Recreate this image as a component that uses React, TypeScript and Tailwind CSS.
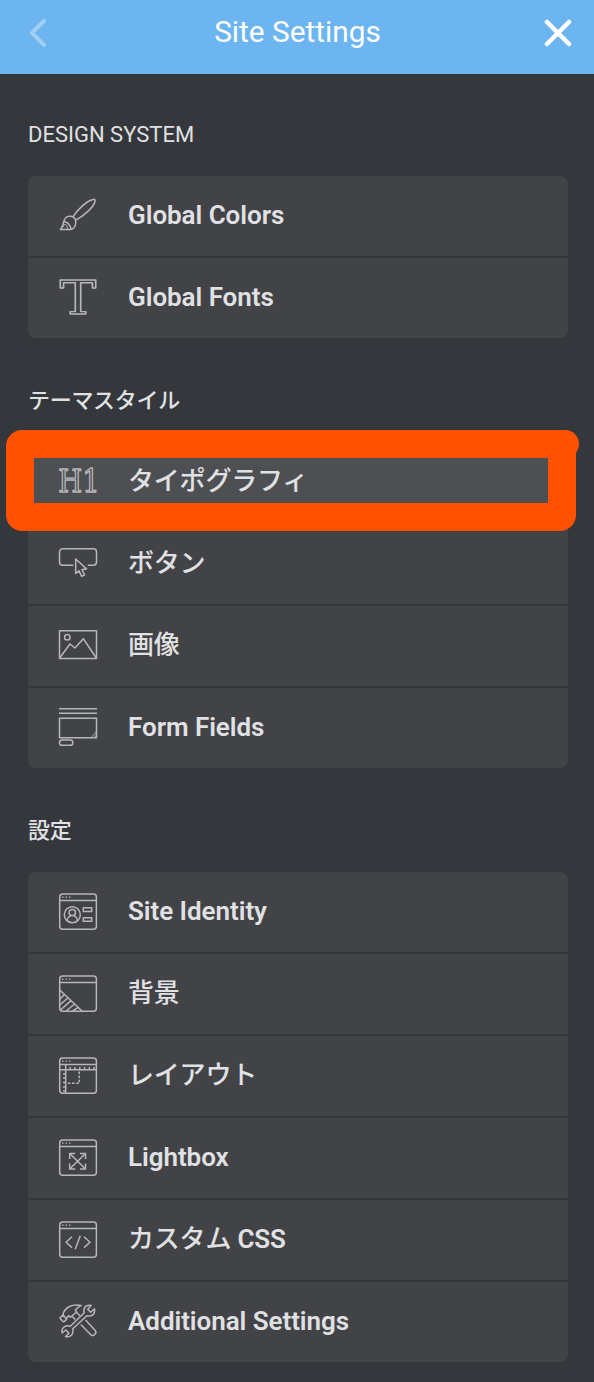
import type {ReactNode} from "react";

type Item = {
    label: ReactNode;
    icon: ReactNode;
    active?: boolean;
}

type SectionProps = {
    title: string;
    titleClass: string;
    items: Item[];
}

const Icon = ({children}: {children: ReactNode}) => (
    <svg viewBox="0 0 40 40" width={40} height={40} fill="none" stroke="currentColor"
         strokeWidth={1.5} strokeLinejoin="round" className="shrink-0 overflow-visible text-[#b6b7b9]">
        {children}
    </svg>
);

//browser window frame shared by the settings icons
const WindowIcon = ({children}: {children: ReactNode}) => (
    <Icon>
        <rect x="1.7" y="1.9" width="36.7" height="35.3" rx="3"/>
        <path d="M1.5 8.4H38.5"/>
        <path d="M4 5.2h1.5M7.5 5.2h1.5M11 5.2h1.5" strokeWidth="1.2"/>
        {children}
    </Icon>
);

const BrushIcon = () => (
    <Icon>
        <path d="M15.3 20.3C19 14.5 28.5 4.5 35.3 3.4C36.8 3.2 37.4 4 37 5.5C35.5 11.5 25 20.5 18.2 23.8"/>
        <path d="M2.5 33.4C4.8 31.2 5.2 28.6 5.8 25.5C6.5 21.8 9.5 20 12.6 20.3C15.8 20.6 17.8 23 17.8 26C17.8 30.3 15.5 33.5 12.5 33.5Z"/>
        <path d="M5.8 25.5C9.3 26 12 28.6 13.2 33.4"/>
        <path d="M4.8 31.5C5.5 29.5 6.3 28.2 7.2 28.3C8.4 28.6 9.3 30.5 9.6 33.2" strokeWidth="1"/>
    </Icon>
);

const LetterIcon = () => (
    <Icon>
        <text x="20" y="35.9" fontSize="47" textAnchor="middle" fontFamily="DejaVu Serif, serif"
              textLength="36.5" lengthAdjust="spacingAndGlyphs" strokeWidth="1.4">T</text>
    </Icon>
);

const HeadingIcon = () => (
    <Icon>
        <text x="0.2" y="30.3" fontSize="31.5" fontFamily="DejaVu Serif, serif"
              textLength="41.5" lengthAdjust="spacingAndGlyphs" strokeWidth="1.4">H1</text>
    </Icon>
);

const ButtonIcon = () => (
    <Icon>
        <path d="M15.3 21.2H4.7A3.2 3.2 0 0 1 1.5 18V8A3.2 3.2 0 0 1 4.7 4.8H35.3A3.2 3.2 0 0 1 38.5 8V18A3.2 3.2 0 0 1 35.3 21.2H29.7"/>
        <path d="M17.7 15V29.5L21 26.8L23.7 32.3L26.6 31L24 25.6L28.5 24.9Z"/>
    </Icon>
);

const ImageIcon = () => (
    <Icon>
        <rect x="1.5" y="4.7" width="37" height="27.8"/>
        <circle cx="9.3" cy="11.3" r="2.8"/>
        <path d="M1.7 32L12 18L17 22L25.3 12.7L38.3 32"/>
    </Icon>
);

const FormIcon = () => (
    <Icon>
        <path d="M1 .7H39M1 5.2H39"/>
        <rect x="1.5" y="10.3" width="37" height="19.4"/>
        <path d="M38.5 23.8L33 29.7M38.5 27L36 29.7" strokeWidth="1"/>
        <rect x="1.5" y="32" width="13.3" height="5.3" rx="2.6"/>
    </Icon>
);

const IdentityIcon = () => (
    <WindowIcon>
        <circle cx="14.3" cy="22.7" r="8"/>
        <circle cx="14.3" cy="20.6" r="3.2"/>
        <path d="M8.8 28.4C9.2 25.8 11 24.7 12.6 23.7M19.8 28.4C19.4 25.8 17.6 24.7 16 23.7"/>
        <path d="M25.3 15.8h8.4v3.6h-8.4zM25.3 25.7h8.4v3.6h-8.4z"/>
    </WindowIcon>
);

const BackgroundIcon = () => (
    <WindowIcon>
        <path d="M1.7 16L24.3 37.2"/>
        <path d="M1.7 25.2L6.5 20.5M1.7 31L10 23.8M2.5 36L13 26.6M8 37L16.7 30M14.5 37L20.3 33.4"/>
    </WindowIcon>
);

const LayoutIcon = () => (
    <WindowIcon>
        <path d="M1.5 13.7H38.5M7.7 8.3V37.3"/>
        <path d="M12.2 13.7v-2.8M17 13.7v-2.8M21.8 13.7v-2.8M26.6 13.7v-2.8M31.4 13.7v-2.8M36 13.7v-2.8"/>
        <path d="M7.7 18H5M7.7 22.3H5M7.7 26.6H5M7.7 30.9H5M7.7 35H5"/>
        <path d="M21.2 15.5V27.3H9" strokeDasharray="2.6 1.5"/>
    </WindowIcon>
);

const LightboxIcon = () => (
    <WindowIcon>
        <path d="M11.7 15.5L27.5 31M27.5 15.5L11.7 31"/>
        <path d="M11.7 21V15.5H17.2M22 15.5H27.5V21M27.5 25.5V31H22M17.2 31H11.7V25.5"/>
    </WindowIcon>
);

const CodeIcon = () => (
    <WindowIcon>
        <path d="M14 16.8L8 22.2L14 27.6M26 16.8L32 22.2L26 27.6M22.3 15.7L17.2 29.3"/>
    </WindowIcon>
);

const ToolsIcon = () => (
    <Icon>
        {/*hammer*/}
        <path d="M2.2 15.6L5 13L8.8 17L6.2 19.6Q5 20 4 18.6L2.2 16.5Q1.8 16 2.2 15.6Z"/>
        <path d="M5 13C5.2 9.5 8 6.5 11.5 4.5C15.5 2.6 19.5 2.8 23 3.6C20.5 4.8 18.3 6.3 17.3 8.2L18.5 10L12.5 15.2L10.7 13.7L8.5 16.3"/>
        <path d="M14 14.2L17.3 17.6M18.3 10.2L22.2 14M22.8 22.4L32.6 32.6Q34.4 34.4 36.5 32.8Q39 30.6 37.2 28.4L27.6 18.1"/>
        {/*wrench*/}
        <path d="M36.5 6.7L32.7 10.2L29.7 7.2L33.2 3.5C30.2 2.6 26.8 4 26 7C25.6 8.4 25.8 9.6 26.3 10.8L12.3 24.2C8.8 22.8 5 24.4 4 27.9C3.7 29 3.8 30.1 4.2 31L7.8 28L11 31.2L7.4 34.5C10.8 35.5 14.4 33.8 15 30.2C15.2 29 15 28 14.6 27L28.8 13.8C32.4 14.8 35.6 13.3 36.4 10.2C36.7 9 36.8 7.8 36.5 6.7Z"/>
    </Icon>
);

const Ja = ({children}: {children: ReactNode}) => (
    <span className="relative -top-0.5 font-['Noto_Sans_CJK_JP',sans-serif] font-medium tracking-[-0.2px]">{children}</span>
);

const designItems: Item[] = [
    {label: "Global Colors", icon: <BrushIcon/>},
    {label: "Global Fonts", icon: <LetterIcon/>},
];

const themeItems: Item[] = [
    {label: <Ja>タイポグラフィ</Ja>, icon: <HeadingIcon/>, active: true},
    {label: <Ja>ボタン</Ja>, icon: <ButtonIcon/>},
    {label: <Ja>画像</Ja>, icon: <ImageIcon/>},
    {label: "Form Fields", icon: <FormIcon/>},
];

const settingsItems: Item[] = [
    {label: "Site Identity", icon: <IdentityIcon/>},
    {label: <Ja>背景</Ja>, icon: <BackgroundIcon/>},
    {label: <Ja>レイアウト</Ja>, icon: <LayoutIcon/>},
    {label: "Lightbox", icon: <LightboxIcon/>},
    {label: <span className="relative -top-0.5 tracking-[-0.2px]"><Ja><span className="relative top-0.5">カスタム</span></Ja> CSS</span>, icon: <CodeIcon/>},
    {label: "Additional Settings", icon: <ToolsIcon/>},
];

const Row = ({label, icon, active}: Item) => (
    <li className="relative">
        <button className={`flex h-20 w-full items-center gap-[30px] px-[30px] text-left ${active ? "bg-[#4e4f53]" : "bg-[#424347]"}`}>
            {icon}
            <span className="h-[42px] text-[26px] leading-[40px] font-semibold tracking-[-0.05px] whitespace-nowrap">{label}</span>
        </button>
        {/*highlight frame around the active row*/}
        {active &&
            <div className="pointer-events-none absolute -top-3 -left-[22px] z-10 h-[101px] w-[570px] rounded-2xl border-[28px] border-[#ff5200]">
                <span className="absolute -top-7 -right-[31px] size-7 rounded-full bg-[#ff5200]"/>
            </div>}
    </li>
);

const Section = ({title, titleClass, items}: SectionProps) => (
    <section>
        <h2 className={`flex h-6 items-center text-[22px] ${titleClass}`}>{title}</h2>
        <ul className="mt-[30px] flex flex-col gap-0.5 [&>li:first-child>button]:rounded-t-lg [&>li:last-child>button]:rounded-b-lg">
            {items.map((item, i) => <Row key={i} {...item}/>)}
        </ul>
    </section>
);

const App = () => {
    return (
        <div className="h-[1382px] w-[594px] overflow-hidden bg-[#34373b] font-[Roboto,'Noto_Sans_CJK_JP',sans-serif] text-[#e0e1e3]">
            <header className="flex h-[74px] items-center justify-between bg-[#6db5f0] pr-[22px] pb-[11px] pl-[27px] text-white">
                <svg viewBox="0 0 22 32" width={22} height={32} fill="none" stroke="#a3cff3" strokeWidth={4} strokeLinecap="round" strokeLinejoin="round">
                    <path d="M17 4.8L5 16.8L17 28.8"/>
                </svg>
                <h1 className="pl-0.5 text-[29.8px] leading-8">Site Settings</h1>
                <svg viewBox="0 0 28 32" width={28} height={32} fill="none" stroke="currentColor" strokeWidth={4.5} strokeLinecap="round">
                    <path d="M3 6L25 28M25 6L3 28"/>
                </svg>
            </header>
            <main className="flex flex-col gap-[50px] px-[28px] pt-12 pr-[26px]">
                <Section title="DESIGN SYSTEM" titleClass="pt-0.5 leading-6" items={designItems}/>
                <Section title="テーマスタイル" titleClass="pb-[5px] leading-6 font-medium tracking-[-0.3px] font-['Noto_Sans_CJK_JP',sans-serif]" items={themeItems}/>
                <Section title="設定" titleClass="pb-1 leading-6 font-medium tracking-[-0.3px] font-['Noto_Sans_CJK_JP',sans-serif]" items={settingsItems}/>
            </main>
        </div>
    );
};

export default App;
